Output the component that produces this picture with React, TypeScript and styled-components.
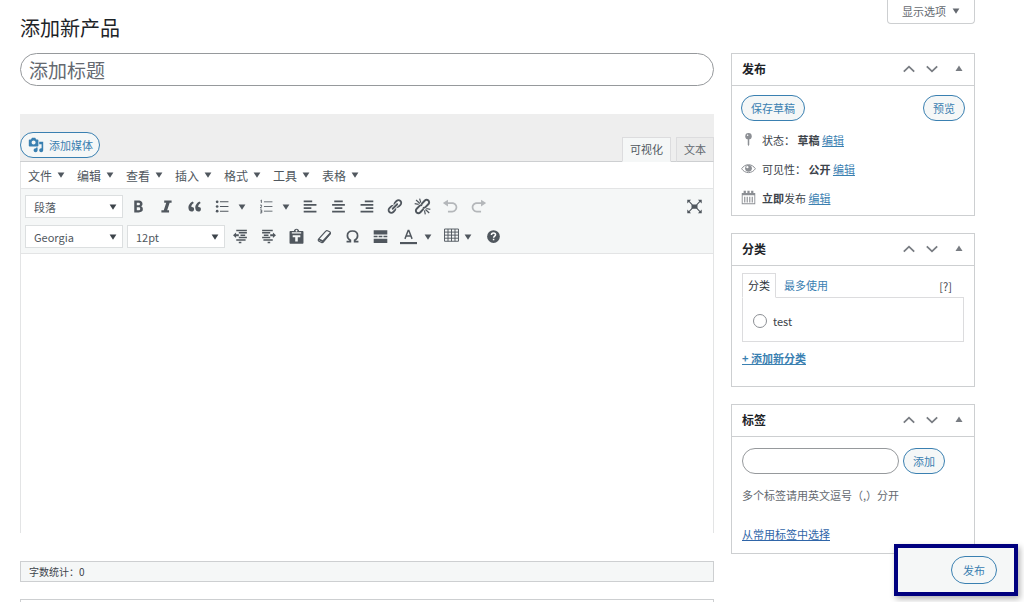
import React from "react";
import styled, { createGlobalStyle, css } from "styled-components";

const font = `"Noto Sans CJK SC", "Noto Sans", sans-serif`;
const blue = "#3a80b1";
const line = "#cdcfd1";
const softLine = "#e3e4e5";
const ink = "#3c434a";
const toolbarBg = "#f5f7f7";

const GlobalStyle = createGlobalStyle`
  * { box-sizing: border-box; }
  body { margin: 0; background: #fff; }
  body, button, input, select, textarea { font-family: ${font}; font-size: 11px; color: ${ink}; }
  button { margin: 0; padding: 0; border: 0; background: none; cursor: pointer; }
  svg { display: block; }
`;

const Page = styled.div`
  height: 100vh;
  overflow: hidden;
  padding: 0 49px 0 20px;
  line-height: 16px;
`;

const TopBar = styled.header`
  display: flex;
  justify-content: space-between;
  align-items: flex-start;
  height: 53px;
`;

const PageTitle = styled.h1`
  margin: 13px 0 0;
  font-size: 20px;
  line-height: 30px;
  font-weight: 400;
  color: #1d2327;
`;

const ScreenOptions = styled.button`
  display: flex;
  align-items: center;
  justify-content: center;
  gap: 6px;
  width: 88px;
  height: 24px;
  padding-bottom: 1px;
  border: 1px solid ${line};
  border-top: 0;
  border-radius: 0 0 4px 4px;
  color: #646970;
`;

const Columns = styled.div`
  display: grid;
  grid-template-columns: minmax(0, 1fr) 244px;
  gap: 17px;
  align-items: start;
`;

const Main = styled.main`
  display: flex;
  flex-direction: column;
`;

const TitleInput = styled.input`
  height: 33px;
  padding: 0 8px;
  border: 1px solid #96999c;
  border-radius: 17px;
  background: #fff;
  font-size: 19px;
  &::placeholder { color: #646970; opacity: 1; }
`;

const EditorHead = styled.div`
  display: flex;
  justify-content: space-between;
  align-items: flex-end;
  height: 48px;
  margin-top: 28px;
  background: #eeeeee;
  border-bottom: 1px solid ${line};
`;

const PillButton = styled.button<{ $wide?: boolean }>`
  display: inline-flex;
  align-items: center;
  justify-content: center;
  gap: 5px;
  height: 26px;
  padding: 0 ${(p) => (p.$wide ? 11 : 9)}px 1px;
  border: 1px solid ${blue};
  border-radius: 14px;
  background: #f5f7f7;
  color: ${blue};
  white-space: nowrap;
`;

const MediaSlot = styled.div`
  padding-bottom: 3px;
  ${PillButton} { padding: 0 6px 0 7px; }
`;

const ModeTabs = styled.div`
  display: flex;
  gap: 5px;
  margin-bottom: -1px;
`;

const ModeTab = styled.button<{ $active?: boolean }>`
  height: 25px;
  padding: 0 7px 1px;
  border: 1px solid #dcdcde;
  border-bottom-color: ${(p) => (p.$active ? toolbarBg : line)};
  background: ${(p) => (p.$active ? toolbarBg : "#ebebeb")};
  color: ${(p) => (p.$active ? "#50575e" : "#646970")};
`;

const EditorFrame = styled.div`
  display: flex;
  flex-direction: column;
  border: 1px solid ${softLine};
  border-width: 0 1px;
`;

const MenuBar = styled.nav`
  display: flex;
  gap: 12px;
  height: 27px;
  padding: 0 8px 0 7px;
  border-bottom: 1px solid ${softLine};
`;

const MenuButton = styled.button`
  display: flex;
  align-items: center;
  gap: 5px;
  font-size: 12px;
  color: #50575e;
`;

const Toolbar = styled.div`
  display: flex;
  flex-direction: column;
  gap: 7px;
  padding: 6px 5px 5px 4px;
  background: ${toolbarBg};
  border-bottom: 1px solid ${softLine};
`;

const SelectBox = styled.span`
  display: inline-grid;
  align-items: center;
  width: 98px;
  margin-right: 1px;
  & + & { margin-left: 3px; }
  & > * { grid-area: 1 / 1; }
  & > svg { justify-self: end; margin-right: 6px; pointer-events: none; }
`;

const ToolRow = styled.div`
  display: flex;
  align-items: center;
  height: 23px;
`;

const SelectInput = styled.select`
  appearance: none;
  width: 100%;
  height: 23px;
  padding: 0 8px;
  border: 1px solid #dcdfe0;
  border-radius: 0;
  background: #fff;
  color: #50575e;
`;

const ToolButton = styled.button<{ $faded?: boolean; $end?: boolean }>`
  display: flex;
  align-items: center;
  justify-content: center;
  width: 28px;
  height: 23px;
  color: ${(p) => (p.$faded ? "#b4b7ba" : "#50575e")};
  ${(p) => p.$end && css`margin-left: auto;`}
`;

const SplitButton = styled.div<{ $tight?: boolean }>`
  display: flex;
  align-items: center;
  gap: ${(p) => (p.$tight ? 0 : 2)}px;
  width: ${(p) => (p.$tight ? 41 : 44)}px;
  ${(p) => p.$tight && css`${ToolButton} { width: 26px; }`}
`;

const SplitArrow = styled.button`
  display: flex;
  align-items: center;
  flex: 1;
  height: 23px;
  color: #50575e;
`;

const Canvas = styled.textarea`
  width: 100%;
  height: 279px;
  padding: 10px;
  border: 0;
  outline: 0;
  resize: none;
  background: #fff;
`;

const StatusBar = styled.div`
  display: flex;
  align-items: center;
  height: 21px;
  margin-top: 28px;
  padding: 0 8px;
  border: 1px solid ${line};
  background: ${toolbarBg};
  font-size: 10px;
`;

const NextPanel = styled.section`
  height: 40px;
  margin-top: 17px;
  border: 1px solid ${line};
`;

const Sidebar = styled.aside`
  display: flex;
  flex-direction: column;
  gap: 17px;
`;

const Panel = styled.section`
  border: 1px solid ${line};
  background: #fff;
`;

const PanelHead = styled.div`
  display: flex;
  align-items: center;
  height: 32px;
  padding: 0 10px 1px;
  border-bottom: 1px solid ${line};
`;

const PanelTitle = styled.h2`
  flex: 1;
  margin: 0;
  font-size: 12px;
  font-weight: 700;
  color: #1d2327;
`;

const PanelActions = styled.div`
  display: flex;
  align-items: center;
  gap: 9px;
  color: #787c82;
  button { display: flex; color: inherit; }
  button:last-child { margin-left: 6px; }
`;

const PublishBody = styled.div`
  padding: 9px 9px 3px;
`;

const ButtonRow = styled.div`
  display: flex;
  justify-content: space-between;
  margin-bottom: 4px;
`;

const MetaRow = styled.div`
  display: flex;
  align-items: center;
  gap: 6px;
  height: 29px;
  svg { color: #8c8f94; }
`;

const TextLink = styled.a<{ $strong?: boolean; $deep?: boolean }>`
  color: ${(p) => (p.$deep ? "#2f65a8" : blue)};
  font-weight: ${(p) => (p.$strong ? 700 : 400)};
  text-decoration: underline;
`;

const CategoryBody = styled.div`
  padding: 7px 10px 20px;
`;

const CategoryTabs = styled.div`
  display: flex;
  align-items: center;
  height: 25px;
  margin-bottom: -1px;
`;

const CategoryTab = styled.button<{ $active?: boolean }>`
  height: 25px;
  padding: 0 ${(p) => (p.$active ? 5 : 8)}px 1px;
  ${(p) =>
    p.$active
      ? css`border: 1px solid #dcdcde; border-bottom-color: #fff; background: #fff; color: #2c3338;`
      : css`color: ${blue};`}
`;

const HelpLink = styled.button`
  margin-left: auto;
  margin-right: 12px;
`;

const CategoryList = styled.div`
  height: 45px;
  margin-bottom: 8px;
  padding: 15px 10px;
  border: 1px solid #dcdcde;
`;

const RadioLabel = styled.label`
  display: flex;
  align-items: center;
  gap: 6px;
  height: 16px;
`;

const Radio = styled.input`
  appearance: none;
  width: 14px;
  height: 14px;
  margin: 0;
  border: 1px solid #8c8f94;
  border-radius: 50%;
`;

const TagBody = styled.div`
  padding: 11px 10px;
`;

const TagRow = styled.div`
  display: flex;
  gap: 4px;
`;

const TagInput = styled.input`
  width: 157px;
  height: 26px;
  padding: 0 10px;
  border: 1px solid #96999c;
  border-radius: 13px;
`;

const Hint = styled.p`
  margin: 13px 0 23px;
  color: #646970;
`;

const PublishBar = styled.div`
  position: fixed;
  right: 6px;
  bottom: 6px;
  display: flex;
  align-items: center;
  justify-content: flex-end;
  width: 124px;
  height: 52px;
  padding-right: 17px;
  border: 4px solid #00007f;
  background: ${toolbarBg};
  box-shadow: 2px 3px 6px rgba(0, 0, 0, 0.3);
  ${PillButton} { height: 28px; }
`;

const Caret = () => (
  <svg width="8" height="6" viewBox="0 0 8 6" aria-hidden="true">
    <path d="M.6.4h6.8L4 5.8z" fill="currentColor" />
  </svg>
);

const Icon = ({ size = 17, children }: { size?: number; children: React.ReactNode }) => (
  <svg width={size} height={size} viewBox="0 0 20 20" fill="currentColor" aria-hidden="true">
    {children}
  </svg>
);

const stroke = { fill: "none", stroke: "currentColor" };

const icons = {
  media: <path d="M13 11V4c0-.55-.45-1-1-1h-1.67L9 1H5L3.67 3H2c-.55 0-1 .45-1 1v7c0 .55.45 1 1 1h10c.55 0 1-.45 1-1zM7 4.5c1.38 0 2.5 1.12 2.5 2.5S8.38 9.5 7 9.5 4.5 8.38 4.5 7 5.62 4.5 7 4.5zM14 6h5v10.5c0 1.38-1.12 2.5-2.5 2.5S14 17.88 14 16.5s1.12-2.5 2.5-2.5c.17 0 .34.02.5.05V9h-3V6zm-4 8.05V13h2v3.5c0 1.38-1.12 2.5-2.5 2.5S7 17.88 7 16.5 8.12 14 9.5 14c.17 0 .34.02.5.05z" />,
  bold: <path d="M5 3v14h5.300c1.500 0 2.700-.4 3.500-1 .9-.7 1.300-1.700 1.300-2.900 0-.9-.2-1.600-.6-2.200s-1-.9-1.800-1.100v-.1c.6-.1 1.100-.4 1.500-1s.5-1.200.5-2c0-1.200-.4-2.100-1.200-2.700S11.400 3 9.600 3H5zm3 5.600V5.500h1.500c.8 0 1.300.1 1.700.3.4.3.5.6.5 1.100 0 .6-.1 1-.5 1.300s-.8.4-1.500.4H8zm0 2.300h1.800c1.500 0 2.200.6 2.200 1.700 0 .6-.2 1.100-.5 1.400s-.9.500-1.600.5H8v-3.600z" />,
  italic: <path d="M16 3v2.500h-2.300L10.800 14.500H13V17H4v-2.500h2.800L9.700 5.500H7.300V3z" />,
  quote: <path d="M9.49 13.22c0-.74-.2-1.38-.61-1.9-.62-.78-1.83-.88-2.53-.72-.29-1.65 1.11-3.75 2.92-4.65L7.88 4c-2.73 1.3-5.42 4.28-4.96 8.05C3.21 14.43 4.59 16 6.54 16c.85 0 1.56-.25 2.12-.75s.83-1.18.83-2.03zm8.05 0c0-.74-.2-1.38-.61-1.9-.63-.78-1.83-.88-2.53-.72-.29-1.65 1.11-3.75 2.92-4.65L15.93 4c-2.73 1.3-5.41 4.28-4.95 8.05.29 2.38 1.66 3.95 3.61 3.95.85 0 1.56-.25 2.12-.75s.83-1.18.83-2.03z" />,
  bullets: (
    <>
      <circle cx="3.7" cy="4.5" r="1.6" /><circle cx="3.7" cy="10" r="1.6" /><circle cx="3.7" cy="15.5" r="1.6" />
      <path d="M7 4.5h10M7 10h10M7 15.5h10" {...stroke} strokeWidth="1.2" />
    </>
  ),
  numbers: (
    <path d="M7 4.5h10M7 10h10M7 15.5h10M3 3.2l1-.8v3.4M2.4 8.4h1.8v1.4L2.6 11.6h2M2.4 14h2v3.6h-2M3 15.8h1.4" {...stroke} strokeWidth="1" />
  ),
  alignLeft: <path d="M2 3h10v2H2zM2 7h15v2H2zM2 11h9v2H2zM2 15h15v2H2z" />,
  alignCenter: <path d="M5 3h10v2H5zM2.5 7h15v2h-15zM5.5 11h9v2h-9zM2.5 15h15v2h-15z" />,
  alignRight: <path d="M8 3h10v2H8zM3 7h15v2H3zM9 11h9v2H9zM3 15h15v2H3z" />,
  link: <path d="M17.74 2.76c1.68 1.69 1.68 4.41 0 6.1l-1.53 1.52c-1.12 1.12-2.7 1.47-4.14 1.09l2.62-2.61.76-.77.76-.76c.84-.84.84-2.2 0-3.04-.84-.85-2.2-.85-3.04 0l-.77.76-3.38 3.38c-.37-1.44-.02-3.02 1.1-4.14l1.52-1.53c1.69-1.68 4.42-1.68 6.1 0zM8.59 13.43l5.34-5.34c.42-.42.42-1.1 0-1.52-.44-.43-1.13-.39-1.53 0l-5.33 5.34c-.42.42-.42 1.1 0 1.52.44.43 1.13.39 1.52 0zm-.76 2.29l4.14-4.15c.38 1.44.03 3.02-1.09 4.14l-1.52 1.53c-1.69 1.68-4.41 1.68-6.1 0-1.68-1.68-1.68-4.42 0-6.1l1.53-1.52c1.12-1.12 2.7-1.47 4.14-1.1l-4.14 4.15c-.85.84-.85 2.2 0 3.05.84.84 2.2.84 3.04 0z" />,
  unlink: (
    <g {...stroke}>
      <path d="M8.800 7.200l3.700-3.900c1.300-1.300 3.200-1.400 4.400-.3 1.200 1.200 1.200 3.100-.1 4.400l-3.300 3.300c-.9.900-2.100 1.100-3.200.7M11.200 12.800l-3.700 3.900c-1.300 1.300-3.200 1.400-4.400.3-1.200-1.200-1.200-3.100.1-4.400l3.300-3.300c.9-.9 2.100-1.100 3.200-.7" strokeWidth="2.300" />
      <path d="M2.400 2.400l4.600 4.100M6.600.8l1.400 4.700M.8 6.600l4.700.8M12.300 14.500l1 4.700M13.500 13.500l4.400 4.200M14.500 12.300l4.700 1.100" strokeWidth="1.400" />
    </g>
  ),
  undo: <path d="M12 5H7V2L1 6l6 4V7h5c2.200 0 4 1.800 4 4s-1.800 4-4 4H7v2h5c3.300 0 6-2.700 6-6s-2.700-6-6-6z" />,
  redo: <path d="M8 5h5V2l6 4-6 4V7H8c-2.200 0-4 1.800-4 4s1.800 4 4 4h5v2H8c-3.300 0-6-2.700-6-6s2.700-6 6-6z" />,
  expand: (
    <>
      <path d="M6.500 7.500h7v5h-7zM1.500 2h4.500l-4.500 4.500zM18.500 2H14l4.500 4.500zM1.500 18H6l-4.500-4.500zM18.500 18H14l4.500-4.500z" />
      <path d="M3 3.500l4.500 4.500M17 3.500L12.500 8M3 16.500L7.500 12M17 16.500L12.500 12" {...stroke} strokeWidth="1.300" />
    </>
  ),
  outdent: <path d="M5 2h12.500v1.800H5zM8 4.800h9.500v1.800H8zM10 7.600h5.500v1.800H10zM8 10.400h9.500v1.800H8zM5 13.200h11v1.800H5zM8 16.200h3v1.800H8zM4.800 5.200v2.200H8v2.200H4.800v2.200L1.200 8.500z" />,
  indent: <path d="M2.500 2H15v1.800H2.500zM2.500 4.800H12v1.800H2.500zM4.500 7.600H10v1.800H4.500zM2.500 10.400H12v1.800H2.500zM4 13.200h11v1.800H4zM9 16.200h3v1.800H9zM15.200 5.200l3.600 3.300-3.600 3.300V9.600H12V7.400h3.200z" />,
  paste: (
    <path fillRule="evenodd" d="M7 3.500C7 1.900 8.300.8 10 .8s3 1.100 3 2.700h4c.7 0 1.200.5 1.200 1.200v12.600c0 .7-.5 1.200-1.200 1.200H3c-.7 0-1.200-.5-1.200-1.200V4.700c0-.7.5-1.200 1.200-1.200zM10 2.200a1.100 1.100 0 1 0 0 2.200 1.100 1.100 0 0 0 0-2.200zM4.500 5v1.600h11V5zM5.500 8.500v2.500h3v5h3v-5h3V8.500z" />
  ),
  eraser: (
    <g {...stroke}>
      <path d="M3 13.200L11.500 3.700c.5-.6 1.300-.8 2-.5l2.600 1.200c.9.400 1.200 1.500.6 2.300L8.500 16.500c-.5.600-1.300.8-2 .5l-3-1.400c-.9-.4-1.100-1.600-.5-2.400z" strokeWidth="1.400" />
      <path d="M3.300 13.300l4.800 2.400L17 6" strokeWidth="2" />
    </g>
  ),
  omega: <path d="M3 16h4.500v-1.600C5.300 13.200 4 11.500 4 9c0-3.300 2.500-5.500 6-5.500S16 5.700 16 9c0 2.500-1.300 4.200-3.500 5.400V16H17" {...stroke} strokeWidth="2" />,
  more: <path d="M2 2.500h16v5H2zM2 9.200h4.500v1.600H2zM7.800 9.200h4.400v1.600H7.800zM13.500 9.200H18v1.600h-4.500zM2 12.500h16v5H2z" />,
  color: (
    <>
      <path d="M5.800 12.800L9.600 2.800h.8l3.800 10M7.200 9.500h5.600" {...stroke} strokeWidth="1.700" />
      <path d="M0 16.500h20V19H0z" />
    </>
  ),
  table: <path d="M1.800 1.200h16.400v14.400H1.800zM1.800 4.800h16.400M1.800 8.400h16.400M1.800 12h16.400M5.900 1.200v14.400M10 1.200v14.400M14.100 1.200v14.400" {...stroke} strokeWidth="1.100" />,
  help: (
    <>
      <circle cx="10" cy="10" r="7.500" />
      <path d="M7.600 8.200c0-1.500 1-2.400 2.400-2.400s2.400.9 2.400 2.100c0 1.600-2.200 1.700-2.200 3.500M10.100 12.700v1.800" fill="none" stroke="#fff" strokeWidth="1.800" />
    </>
  ),
  pin: (
    <>
      <circle cx="10" cy="5.500" r="4.300" />
      <path d="M9 9h2v7.500L10 19l-1-2.500z" />
      <circle cx="8.800" cy="4.300" r="1" fill="#fff" />
    </>
  ),
  eye: (
    <>
      <path d="M.8 10.300C3 7 6.200 4.900 10 4.900s7 2.100 9.200 5.400c-2.200 3.200-5.400 5.200-9.200 5.200S3 13.500.8 10.300z" {...stroke} strokeWidth="1.300" />
      <circle cx="10" cy="9.700" r="4.500" />
      <circle cx="8.500" cy="8.300" r="1.500" fill="#fff" />
    </>
  ),
  calendar: (
    <>
      <path fillRule="evenodd" d="M1 4h18v15H1zM2.200 7v10.800h15.600V7z" />
      <path d="M3.500 1h3v4h-3zM8.500 1h3v4h-3zM13.500 1h3v4h-3z" />
      <path d="M5 9v7.500M8.300 9v7.500M11.700 9v7.500M15 9v7.500" {...stroke} strokeWidth="1.500" />
    </>
  ),
};

type IconName = keyof typeof icons;

const Tool = ({ icon, label, faded, end }: { icon: IconName; label: string; faded?: boolean; end?: boolean }) => (
  <ToolButton type="button" aria-label={label} $faded={faded} $end={end}>
    <Icon>{icons[icon]}</Icon>
  </ToolButton>
);

const SplitTool = ({ icon, label, tight }: { icon: IconName; label: string; tight?: boolean }) => (
  <SplitButton $tight={tight}>
    <Tool icon={icon} label={label} />
    <SplitArrow type="button" aria-label={label + "选项"}><Caret /></SplitArrow>
  </SplitButton>
);

const Dropdown = ({ label, value }: { label: string; value: string }) => (
  <SelectBox>
    <SelectInput aria-label={label} defaultValue={value}>
      <option>{value}</option>
    </SelectInput>
    <Caret />
  </SelectBox>
);

const PanelBox = ({ title, children }: { title: string; children: React.ReactNode }) => (
  <Panel>
    <PanelHead>
      <PanelTitle>{title}</PanelTitle>
      <PanelActions>
        <button type="button" aria-label="上移">
          <svg width="14" height="14" viewBox="0 0 14 14"><path d="M1.800 9.700L7 4.700l5.200 5" {...stroke} strokeWidth="1.800" /></svg>
        </button>
        <button type="button" aria-label="下移">
          <svg width="14" height="14" viewBox="0 0 14 14"><path d="M1.800 4.300l5.200 5 5.200-5" {...stroke} strokeWidth="1.800" /></svg>
        </button>
        <button type="button" aria-label="切换面板">
          <svg width="10" height="14" viewBox="0 0 10 14"><path d="M1.500 9h7L5 3.500z" fill="currentColor" /></svg>
        </button>
      </PanelActions>
    </PanelHead>
    {children}
  </Panel>
);

const menus = ["文件", "编辑", "查看", "插入", "格式", "工具", "表格"];

export default function App() {
  return (
    <Page>
      <GlobalStyle />
      <TopBar>
        <PageTitle>添加新产品</PageTitle>
        <ScreenOptions type="button">显示选项<Caret /></ScreenOptions>
      </TopBar>
      <Columns>
        <Main>
          <TitleInput aria-label="添加标题" placeholder="添加标题" />
          <EditorHead>
            <MediaSlot>
              <PillButton type="button"><Icon size={16}>{icons.media}</Icon>添加媒体</PillButton>
            </MediaSlot>
            <ModeTabs>
              <ModeTab type="button" $active>可视化</ModeTab>
              <ModeTab type="button">文本</ModeTab>
            </ModeTabs>
          </EditorHead>
          <EditorFrame>
            <MenuBar>
              {menus.map((m) => (
                <MenuButton type="button" key={m}>{m}<Caret /></MenuButton>
              ))}
            </MenuBar>
            <Toolbar>
              <ToolRow>
                <Dropdown label="段落格式" value="段落" />
                <Tool icon="bold" label="粗体" />
                <Tool icon="italic" label="斜体" />
                <Tool icon="quote" label="引用" />
                <SplitTool icon="bullets" label="项目符号列表" />
                <SplitTool icon="numbers" label="编号列表" />
                <Tool icon="alignLeft" label="左对齐" />
                <Tool icon="alignCenter" label="居中" />
                <Tool icon="alignRight" label="右对齐" />
                <Tool icon="link" label="插入链接" />
                <Tool icon="unlink" label="移除链接" />
                <Tool icon="undo" label="撤销" faded />
                <Tool icon="redo" label="重做" faded />
                <Tool icon="expand" label="全屏" end />
              </ToolRow>
              <ToolRow>
                <Dropdown label="字体" value="Georgia" />
                <Dropdown label="字号" value="12pt" />
                <Tool icon="outdent" label="减少缩进" />
                <Tool icon="indent" label="增加缩进" />
                <Tool icon="paste" label="粘贴为文本" />
                <Tool icon="eraser" label="清除格式" />
                <Tool icon="omega" label="特殊字符" />
                <Tool icon="more" label="插入更多标签" />
                <SplitTool icon="color" label="文字颜色" />
                <SplitTool icon="table" label="表格" tight />
                <Tool icon="help" label="键盘快捷键" />
              </ToolRow>
            </Toolbar>
            <Canvas aria-label="产品描述" />
          </EditorFrame>
          <StatusBar>字数统计：0</StatusBar>
          <NextPanel />
        </Main>
        <Sidebar>
          <PanelBox title="发布">
            <PublishBody>
              <ButtonRow>
                <PillButton type="button">保存草稿</PillButton>
                <PillButton type="button">预览</PillButton>
              </ButtonRow>
              <MetaRow>
                <Icon size={15}>{icons.pin}</Icon>
                <span>状态： <b>草稿</b> <TextLink href="#status">编辑</TextLink></span>
              </MetaRow>
              <MetaRow>
                <Icon size={15}>{icons.eye}</Icon>
                <span>可见性： <b>公开</b> <TextLink href="#visibility">编辑</TextLink></span>
              </MetaRow>
              <MetaRow>
                <Icon size={15}>{icons.calendar}</Icon>
                <span><b>立即</b>发布 <TextLink href="#schedule">编辑</TextLink></span>
              </MetaRow>
            </PublishBody>
          </PanelBox>
          <PanelBox title="分类">
            <CategoryBody>
              <CategoryTabs>
                <CategoryTab type="button" $active>分类</CategoryTab>
                <CategoryTab type="button">最多使用</CategoryTab>
                <HelpLink type="button">[?]</HelpLink>
              </CategoryTabs>
              <CategoryList>
                <RadioLabel><Radio type="radio" name="category" />test</RadioLabel>
              </CategoryList>
              <TextLink href="#new-category" $strong>+ 添加新分类</TextLink>
            </CategoryBody>
          </PanelBox>
          <PanelBox title="标签">
            <TagBody>
              <TagRow>
                <TagInput aria-label="添加标签" />
                <PillButton type="button">添加</PillButton>
              </TagRow>
              <Hint>多个标签请用英文逗号（,）分开</Hint>
              <TextLink href="#popular-tags" $deep>从常用标签中选择</TextLink>
            </TagBody>
          </PanelBox>
        </Sidebar>
      </Columns>
      <PublishBar>
        <PillButton type="button" $wide>发布</PillButton>
      </PublishBar>
    </Page>
  );
}
